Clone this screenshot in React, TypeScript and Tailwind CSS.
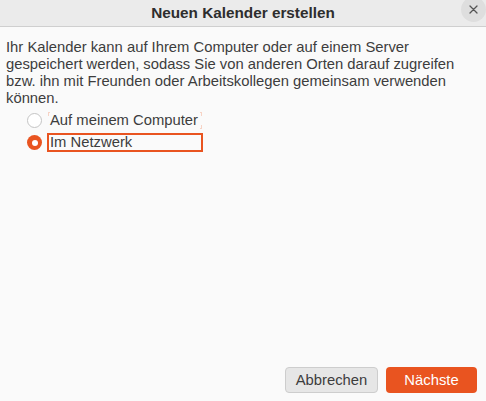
import React, { useState } from 'react';

export default function App() {
  const [mode, setMode] = useState<'local' | 'network'>('network');

  const options = [
    { id: 'local' as const, label: 'Auf meinem Computer' },
    { id: 'network' as const, label: 'Im Netzwerk' },
  ];

  return (
    <div
      className="flex h-[401px] w-[486px] flex-col bg-[#fafafa] text-[14.8px] text-[#3d3d3d]"
      style={{ fontFamily: '"Liberation Sans", Arial, sans-serif' }}
    >
      <div className="relative flex h-[27px] shrink-0 items-center justify-center border-b border-[#cfcfcf] bg-[#ebebeb]">
        <span className="text-[15.3px] font-bold text-[#2e2e2e]">Neuen Kalender erstellen</span>
        <button className="absolute right-[0px] top-[-3px] flex h-[25px] w-[25px] items-center justify-center rounded-full bg-[#dedede]">
          <svg width="9" height="9" viewBox="0 0 9 9" stroke="#555" strokeWidth="1.3" strokeLinecap="round">
            <path d="M1 1 L8 8 M8 1 L1 8" />
          </svg>
        </button>
      </div>

      <div className="flex flex-1 flex-col px-[6px] pt-[12px]">
        <p className="leading-[17px]">
          Ihr Kalender kann auf Ihrem Computer oder auf einem Server
          <br />
          gespeichert werden, sodass Sie von anderen Orten darauf zugreifen
          <br />
          bzw. ihn mit Freunden oder Arbeitskollegen gemeinsam verwenden
          <br />
          können.
        </p>

        <div className="mt-[4px] flex flex-col gap-[3px] pl-[21px]">
          {options.map((o) => {
            const checked = mode === o.id;
            return (
              <label key={o.id} className="flex h-[19px] cursor-pointer items-center gap-[5px]" onClick={() => setMode(o.id)}>
                {checked ? (
                  <span className="flex h-[15px] w-[15px] items-center justify-center rounded-full bg-[#e95420]">
                    <span className="h-[6px] w-[6px] rounded-full bg-white" />
                  </span>
                ) : (
                  <span className="h-[15px] w-[15px] rounded-full border border-[#c4c4c4] bg-white" />
                )}
                {checked ? (
                  <span className="flex h-[19px] w-[156px] items-center border-2 border-[#e95420] px-[1px]">{o.label}</span>
                ) : (
                  <span className="relative flex h-[19px] w-[156px] items-center px-[3px]">
                    {o.label}
                    <span className="absolute left-[1px] top-[1px] h-[4px] w-[2px] border-l border-t border-[#f7d3c5]" />
                    <span className="absolute right-[1px] top-[1px] h-[4px] w-[2px] border-r border-t border-[#f7d3c5]" />
                    <span className="absolute bottom-[1px] right-[1px] h-[4px] w-[2px] border-b border-r border-[#f7d3c5]" />
                  </span>
                )}
              </label>
            );
          })}
        </div>

        <div className="mt-auto flex justify-end gap-[8px] pb-[8px] pr-[3px]">
          <button className="h-[26px] w-[93px] rounded-[4px] border border-[#cdcdcd] bg-[#e6e6e6] text-[#3d3d3d]">
            Abbrechen
          </button>
          <button className="h-[26px] w-[91px] rounded-[4px] bg-[#e95420] text-white">Nächste</button>
        </div>
      </div>
    </div>
  );
}
